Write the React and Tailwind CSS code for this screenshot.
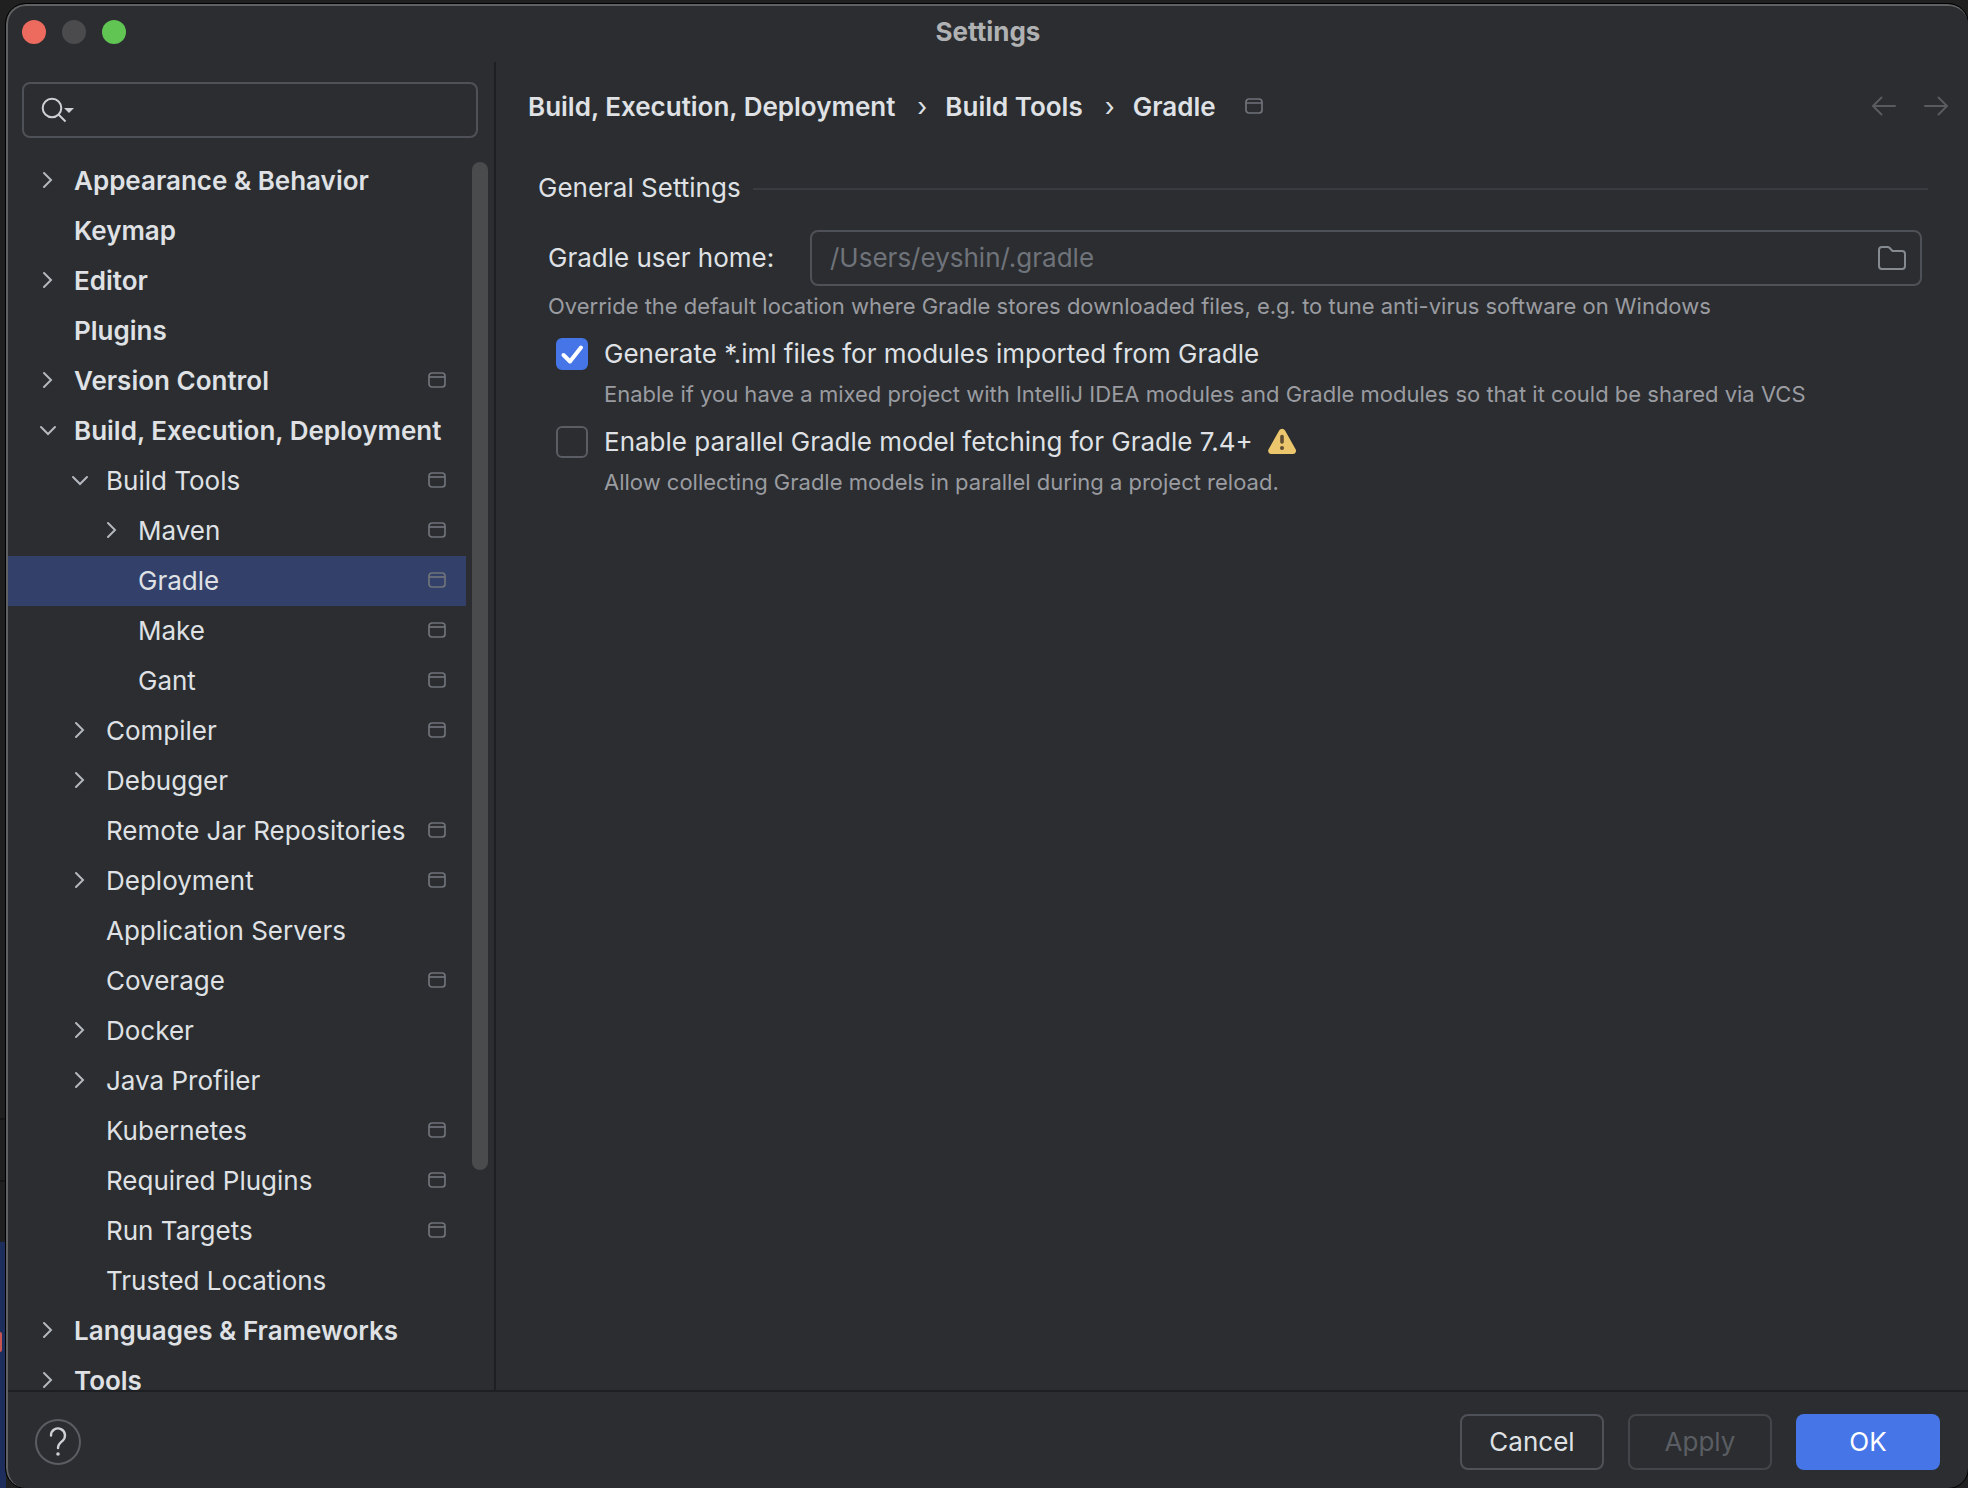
import React from "react";

const tree = [
  { label: "Appearance & Behavior", depth: 0, state: "closed" },
  { label: "Keymap", depth: 0 },
  { label: "Editor", depth: 0, state: "closed" },
  { label: "Plugins", depth: 0 },
  { label: "Version Control", depth: 0, state: "closed", project: true },
  { label: "Build, Execution, Deployment", depth: 0, state: "open" },
  { label: "Build Tools", depth: 1, state: "open", project: true },
  { label: "Maven", depth: 2, state: "closed", project: true },
  { label: "Gradle", depth: 2, project: true, selected: true },
  { label: "Make", depth: 2, project: true },
  { label: "Gant", depth: 2, project: true },
  { label: "Compiler", depth: 1, state: "closed", project: true },
  { label: "Debugger", depth: 1, state: "closed" },
  { label: "Remote Jar Repositories", depth: 1, project: true },
  { label: "Deployment", depth: 1, state: "closed", project: true },
  { label: "Application Servers", depth: 1 },
  { label: "Coverage", depth: 1, project: true },
  { label: "Docker", depth: 1, state: "closed" },
  { label: "Java Profiler", depth: 1, state: "closed" },
  { label: "Kubernetes", depth: 1, project: true },
  { label: "Required Plugins", depth: 1, project: true },
  { label: "Run Targets", depth: 1, project: true },
  { label: "Trusted Locations", depth: 1 },
  { label: "Languages & Frameworks", depth: 0, state: "closed" },
  { label: "Tools", depth: 0, state: "closed" },
];

const indent = ["pl-6", "pl-14", "pl-22"];

const ProjectIcon = () => (
  <svg className="h-[18px] w-[18px] shrink-0" viewBox="0 0 18 18" fill="none" stroke="#6f737a" strokeWidth="1.7">
    <rect x="1" y="1" width="16" height="14" rx="3" />
    <path d="M1 5h16" />
  </svg>
);

const Chevron = ({ state }) => (
  <svg className="h-8 w-8 shrink-0" viewBox="0 0 32 32" fill="none" stroke="#b4b8bf" strokeWidth="2" strokeLinecap="round">
    {state === "closed" && <path d="M12 8l7 7-7 7" />}
    {state === "open" && <path d="M9 12l7 7 7-7" />}
  </svg>
);

const TreeRow = ({ item }) => (
  <li
    role="treeitem"
    aria-selected={Boolean(item.selected)}
    className={`flex h-[50px] items-center pr-5 ${indent[item.depth]} ${item.selected ? "bg-[#33416a]" : ""}`}
  >
    <Chevron state={item.state} />
    <span className={`ml-[10px] flex-1 whitespace-nowrap ${item.depth === 0 ? "font-semibold" : ""}`}>{item.label}</span>
    {item.project && <ProjectIcon />}
  </li>
);

const Sidebar = () => (
  <aside className="flex min-h-0 w-[488px] shrink-0 flex-col border-r-2 border-[#1e1f22]">
    <div className="mt-5 ml-[14px] mr-4 flex h-14 shrink-0 items-center rounded-lg border-2 border-[#4e5157] pl-4">
      <svg className="h-7 w-9 shrink-0" viewBox="0 0 36 28" fill="none" stroke="#ced0d6" strokeWidth="2">
        <circle cx="12" cy="12" r="9.3" />
        <path d="M18.5 18.5l7 7" />
        <path d="M24 12h10l-5 5z" fill="#ced0d6" stroke="none" />
      </svg>
      <input type="text" aria-label="Search settings" className="min-w-0 flex-1 bg-transparent px-2 outline-none" />
    </div>
    <div className="mt-[18px] flex min-h-0 flex-1">
      <ul role="tree" className="min-h-0 flex-1 overflow-hidden">
        {tree.map((item) => (
          <TreeRow key={item.label} item={item} />
        ))}
      </ul>
      <div className="mx-[6px] mt-[6px] h-[1008px] w-4 rounded-full bg-[#4a4b4d]" />
    </div>
  </aside>
);

const Option = ({ id, label, hint, checked, warning }) => (
  <div>
    <div className="flex h-9 items-center">
      <span className="relative flex h-8 w-8 shrink-0">
        <input
          id={id}
          type="checkbox"
          defaultChecked={checked}
          className="peer h-8 w-8 appearance-none rounded-md border-2 border-[#5a5d63] checked:border-[#4675e8] checked:bg-[#4675e8]"
        />
        <svg
          className="pointer-events-none absolute inset-0 hidden h-8 w-8 peer-checked:block"
          viewBox="0 0 32 32"
          fill="none"
          stroke="#fff"
          strokeWidth="4"
          strokeLinecap="round"
          strokeLinejoin="round"
        >
          <path d="M7.5 17l6.500 6.500L25 9.500" />
        </svg>
      </span>
      <label htmlFor={id} className="ml-4">{label}</label>
      {warning && (
        <svg className="ml-3 h-8 w-8" viewBox="0 0 32 32">
          <path
            d="M14.300 4.300a3.300 3.300 0 0 1 5.600 0l10.700 18.900a3.200 3.200 0 0 1-2.800 4.800H6.400a3.200 3.200 0 0 1-2.800-4.800z"
            fill="#ecc66c"
          />
          <path d="M17 10.500v5.500" stroke="#5e4d33" strokeWidth="3.600" strokeLinecap="round" />
          <circle cx="17" cy="22" r="2" fill="#5e4d33" />
        </svg>
      )}
    </div>
    <p className="ml-12 mt-1 text-[22px] leading-9 text-[#9a9ca1]">{hint}</p>
  </div>
);

const Content = () => (
  <main className="min-w-0 flex-1 pl-8">
    <header className="flex h-[90px] items-center pr-[18px]">
      <nav aria-label="Breadcrumb" className="flex items-center font-semibold">
        <a href="#">Build, Execution, Deployment</a>
        <span className="w-[50px] pl-1 text-center font-normal">›</span>
        <a href="#">Build Tools</a>
        <span className="w-[50px] pl-1 text-center font-normal">›</span>
        <a href="#">Gradle</a>
      </nav>
      <span className="ml-[29px]">
        <ProjectIcon />
      </span>
      <div className="mb-[2px] ml-auto flex gap-6">
        <button type="button" aria-label="Back">
          <svg className="h-7 w-7" viewBox="0 0 28 28" fill="none" stroke="#5a5b5c" strokeWidth="2" strokeLinecap="round">
            <path d="M25 14H3M11.500 5.500L3 14l8.500 8.500" />
          </svg>
        </button>
        <button type="button" aria-label="Forward">
          <svg className="h-7 w-7" viewBox="0 0 28 28" fill="none" stroke="#5a5b5c" strokeWidth="2" strokeLinecap="round">
            <path d="M3 14h22M16.500 5.500L25 14l-8.500 8.500" />
          </svg>
        </button>
      </div>
    </header>

    <section className="ml-[10px] mr-10">
      <div className="mt-[18px] flex h-9 items-center gap-3">
        <h2>General Settings</h2>
        <div className="mt-[2px] h-[2px] flex-1 bg-[#393b40]" />
      </div>

      <div className="ml-[10px] mr-[6px]">
        <div className="mt-6 flex items-center">
          <label htmlFor="gradle-home" className="w-[262px] shrink-0">Gradle user home:</label>
          <div className="flex h-14 flex-1 items-center rounded-lg border-2 border-[#4e5157] pl-[18px] pr-[14px]">
            <input
              id="gradle-home"
              type="text"
              placeholder="/Users/eyshin/.gradle"
              className="min-w-0 flex-1 bg-transparent outline-none placeholder:text-[#6f737a]"
            />
            <button type="button" aria-label="Browse">
              <svg className="h-7 w-7" viewBox="0 0 28 28" fill="none" stroke="#868a91" strokeWidth="2" strokeLinejoin="round">
                <path d="M1 6a3 3 0 0 1 3-3h5.500a3 3 0 0 1 2 .8L14.500 7H24a3 3 0 0 1 3 3v12a3 3 0 0 1-3 3H4a3 3 0 0 1-3-3z" />
              </svg>
            </button>
          </div>
        </div>
        <p className="mt-[2px] text-[22px] leading-9 text-[#9a9ca1]">
          Override the default location where Gradle stores downloaded files, e.g. to tune anti-virus software on Windows
        </p>
        <div className="ml-2 mt-3 flex flex-col gap-3">
          <Option
            id="generate-iml"
            label="Generate *.iml files for modules imported from Gradle"
            hint="Enable if you have a mixed project with IntelliJ IDEA modules and Gradle modules so that it could be shared via VCS"
            checked
          />
          <Option
            id="parallel-fetch"
            label="Enable parallel Gradle model fetching for Gradle 7.4+"
            hint="Allow collecting Gradle models in parallel during a project reload."
            warning
          />
        </div>
      </div>
    </section>
  </main>
);

const Footer = () => (
  <footer className="flex h-[98px] shrink-0 items-center border-t-2 border-[#1e1f22] pl-[27px] pr-7 pt-1">
    <button type="button" aria-label="Help" className="flex h-[46px] w-[46px] items-center justify-center rounded-full border-2 border-[#5a5d63]">
      <svg className="h-8 w-6" viewBox="0 0 24 32" fill="none" stroke="#ced0d6" strokeWidth="2.400" strokeLinecap="round">
        <path d="M5 9.500a7 7 0 1 1 11.500 5.300c-2.600 2.200-4.500 3.600-4.500 7.200" />
        <circle cx="12" cy="28" r="1.800" fill="#ced0d6" stroke="none" />
      </svg>
    </button>
    <div className="ml-auto flex gap-6">
      <button type="button" className="h-14 w-36 rounded-lg border-2 border-[#4e5157]">Cancel</button>
      <button type="button" disabled className="h-14 w-36 rounded-lg border-2 border-[#43454a] text-[#5a5d63]">Apply</button>
      <button type="button" className="h-14 w-36 rounded-lg bg-[#4675e8] text-white">OK</button>
    </div>
  </footer>
);

// Sliver of the editor window that stays visible behind the dialog
const Backdrop = () => (
  <div className="flex w-[6px] shrink-0 flex-col justify-end">
    <div className="h-[62px] border-t-2 border-[#161616]" />
    <div className="h-[62px] border-t-2 border-[#161616]" />
    <div className="flex h-[246px] flex-col bg-[#1d2d5c] pt-[90px]">
      <div className="h-5 w-[2px] rounded-r-sm bg-[#c75450]" />
    </div>
  </div>
);

const App = () => {
  return (
    <div className="flex h-screen overflow-hidden bg-[#202020] font-['Inter',sans-serif] text-[26px] leading-8 text-[#dfe1e5]">
      <Backdrop />
      <div className="mt-1 flex min-w-0 flex-1 flex-col overflow-hidden rounded-[20px] border-2 border-b-0 border-r-0 border-[#5f6163] bg-[#2b2d30] outline-1 outline-black">
        <div className="relative mb-1 flex h-[52px] shrink-0 items-center">
          <div className="ml-[14px] flex gap-4">
            <span className="h-6 w-6 rounded-full bg-[#ed6a5e]" />
            <span className="h-6 w-6 rounded-full bg-[#4b4b4d]" />
            <span className="h-6 w-6 rounded-full bg-[#61c554]" />
          </div>
          <h1 className="absolute inset-x-0 text-center font-bold text-[#b0b1b3]">Settings</h1>
        </div>
        <div className="flex min-h-0 flex-1">
          <Sidebar />
          <Content />
        </div>
        <Footer />
      </div>
    </div>
  );
};

export default App;
